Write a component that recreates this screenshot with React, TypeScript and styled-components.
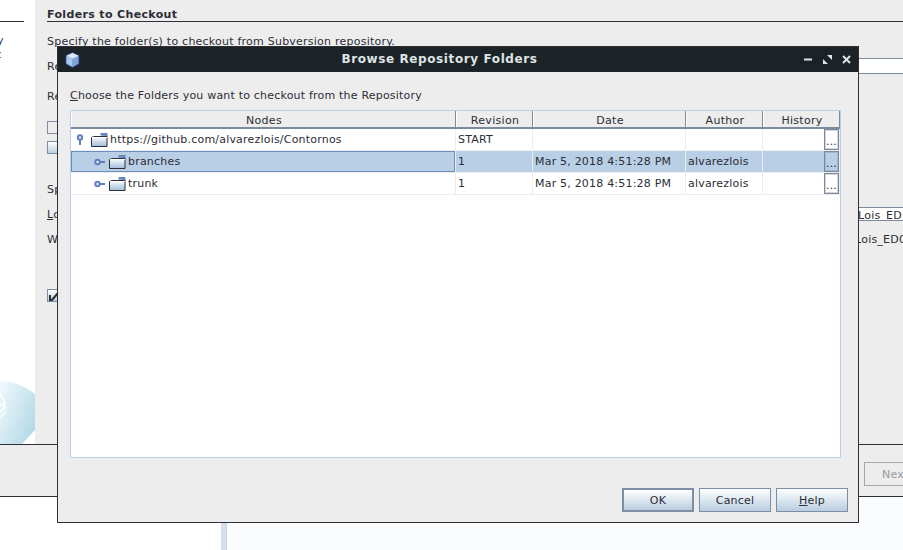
import * as React from 'react'
import styled, { createGlobalStyle } from 'styled-components'

const COLUMNS = [
  { name: 'Nodes', width: 385 },
  { name: 'Revision', width: 77 },
  { name: 'Date', width: 153 },
  { name: 'Author', width: 77 },
  { name: 'History', width: 77 }
]

const ROWS = [
  { label: 'https://github.com/alvarezlois/Contornos', depth: 0, open: true, revision: 'START', date: '', author: '' },
  { label: 'branches', depth: 1, open: false, revision: '1', date: 'Mar 5, 2018 4:51:28 PM', author: 'alvarezlois', selected: true },
  { label: 'trunk', depth: 1, open: false, revision: '1', date: 'Mar 5, 2018 4:51:28 PM', author: 'alvarezlois' }
]

const Handle = ({ open }: { open: boolean }) =>
  open ? (
    <HandleIcon width='8' height='12' viewBox='0 0 8 12'>
      <circle cx='4' cy='3.500' r='2.200' fill='#e8f0fa' stroke='#5f80bd' strokeWidth='2' />
      <path d='M4 6v5' stroke='#5f80bd' strokeWidth='2' />
    </HandleIcon>
  ) : (
    <HandleIcon width='12' height='8' viewBox='0 0 12 8'>
      <circle cx='3.500' cy='4' r='2.200' fill='#e8f0fa' stroke='#5f80bd' strokeWidth='2' />
      <path d='M6 4h5' stroke='#5f80bd' strokeWidth='2' />
    </HandleIcon>
  )

const Folder = ({ id }: { id: string }) => (
  <svg width='17' height='14' viewBox='0 0 17 14'>
    <defs>
      <linearGradient id={id} x1='0' y1='0' x2='0' y2='1'>
        <stop offset='0' stopColor='#ffffff' />
        <stop offset='1' stopColor='#9fbcd9' />
      </linearGradient>
    </defs>
    <path d='M10 2.500V.5h6v3' fill='#6f8fc4' stroke='#5f7fb5' />
    <path d='M.5 4.500l2-1h13.500v10h-15.500z' fill={`url(#${id})`} stroke='#2b2f36' />
    <path d='M1 4.500h15' stroke='#ffffff' />
  </svg>
)

const Cube = () => (
  <svg width='15' height='16' viewBox='0 0 15 16'>
    <path d='M7.500 .5l6.500 3v8.500l-6.500 3.500-6.500-3.500v-8.500z' fill='#7fa6dc' stroke='#27407a' />
    <path d='M1.500 3.800l6 3 6-3-6-2.800z' fill='#dbe9f7' />
    <path d='M1.500 4.200l5.500 2.800v7.500l-5.500-3z' fill='#a9c8ec' />
  </svg>
)

const App: React.FunctionComponent = () => (
  <Screen>
    <GlobalStyle />
    <Wizard>
      <WizardBody>
        <Sidebar>
          <SidebarRule />
          <StepText>y</StepText>
          <StepText>t</StepText>
          <Logo width='35' height='63' viewBox='0 0 35 63'>
            <defs>
              <linearGradient id='logo' x1='0' y1='0' x2='1' y2='0.7'>
                <stop offset='0' stopColor='#f3f9fc' />
                <stop offset='1' stopColor='#b4dae8' />
              </linearGradient>
            </defs>
            <path d='M0 0C14 0 26 6 35 13V49L22 63H0Z' fill='url(#logo)' />
            <path d='M0 14C5 18 6 24 2 30M0 25L5 22M0 31L6 26M0 36L6 31' fill='none' stroke='#fff' strokeWidth='1.600' />
          </Logo>
        </Sidebar>
        <Main>
          <Heading>Folders to Checkout</Heading>
          <FormRow $top={12} $height={14}>
            Specify the folder(s) to checkout from Subversion repository.
          </FormRow>
          <FormRow $top={10} $height={16}>
            Re
            <Field $framed $width={45} />
          </FormRow>
          <FormRow $top={14} $height={16}>
            Re
          </FormRow>
          <CheckBox $top={17} />
          <CheckBox $top={7} $filled />
          <FormRow $top={28} $height={14}>
            Sp
          </FormRow>
          <FormRow $top={11} $height={14}>
            <span>
              <u>L</u>o
            </span>
            <Field $framed $width={45}>
              Lois_ED
            </Field>
          </FormRow>
          <FormRow $top={11} $height={14}>
            W<Field $width={48}>Lois_ED0</Field>
          </FormRow>
          <CheckBox $top={43} $filled>
            <svg width='10' height='10' viewBox='0 0 10 10'>
              <path d='M1 4v5h2l6-7' fill='none' stroke='#2b2f36' strokeWidth='2' />
            </svg>
          </CheckBox>
        </Main>
      </WizardBody>
      <WizardFooter>
        <NextButton>Next</NextButton>
      </WizardFooter>
      <Desktop>
        <DesktopStrip />
      </Desktop>
    </Wizard>

    <Dialog>
      <TitleBar>
        <Cube />
        <TitleText>Browse Repository Folders</TitleText>
        <WindowControls>
          <svg width='9' height='9' viewBox='0 0 9 9'>
            <path d='M0 4.500h8' stroke='#dfe5ea' strokeWidth='2' />
          </svg>
          <svg width='9' height='9' viewBox='0 0 9 9'>
            <path d='M4 0h5v5zM0 4l5 5H0z' fill='#dfe5ea' />
          </svg>
          <svg width='9' height='9' viewBox='0 0 9 9'>
            <path d='M1 1l7 7M8 1l-7 7' stroke='#dfe5ea' strokeWidth='2' />
          </svg>
        </WindowControls>
      </TitleBar>
      <DialogBody>
        <Prompt>
          <u>C</u>hoose the Folders you want to checkout from the Repository
        </Prompt>
        <Table>
          <HeaderRow>
            {COLUMNS.map(column => (
              <HeaderCell key={column.name} $width={column.width}>
                {column.name}
              </HeaderCell>
            ))}
          </HeaderRow>
          {ROWS.map(row => (
            <Row key={row.label} $selected={row.selected}>
              <TreeCell $width={COLUMNS[0].width} $selected={row.selected}>
                <HandleSlot $depth={row.depth}>
                  <Handle open={row.open} />
                </HandleSlot>
                <Folder id={`folder-${row.label.length}`} />
                <NodeLabel>{row.label}</NodeLabel>
              </TreeCell>
              <Cell $width={COLUMNS[1].width}>{row.revision}</Cell>
              <Cell $width={COLUMNS[2].width}>{row.date}</Cell>
              <Cell $width={COLUMNS[3].width}>{row.author}</Cell>
              <HistoryCell $width={COLUMNS[4].width}>
                <EllipsisButton>...</EllipsisButton>
              </HistoryCell>
            </Row>
          ))}
        </Table>
        <Buttons>
          <Button $primary>OK</Button>
          <Button>Cancel</Button>
          <Button>
            <u>H</u>elp
          </Button>
        </Buttons>
      </DialogBody>
    </Dialog>
  </Screen>
)

export default App

const GlobalStyle = createGlobalStyle`
  html, body {
    margin: 0;
    padding: 0;
    background: #fff;
  }

  * {
    box-sizing: border-box;
  }
`

const Screen = styled.div`
  position: relative;
  width: 903px;
  height: 550px;
  overflow: hidden;
  font-family: 'DejaVu Sans', sans-serif;
  font-size: 11px;
  letter-spacing: 0.2px;
  color: #2c2d36;
  white-space: nowrap;
`

const Wizard = styled.div`
  display: flex;
  flex-direction: column;
  height: 100%;
`

const WizardBody = styled.div`
  display: flex;
  height: 444px;
`

const Sidebar = styled.div`
  display: flex;
  flex-direction: column;
  width: 35px;
  background: #fff;
  overflow: hidden;
`

const SidebarRule = styled.div`
  width: 24px;
  height: 1px;
  margin-top: 21px;
  margin-bottom: 12px;
  background: #2f3034;
`

const StepText = styled.div`
  height: 14px;
  color: #1d3a72;
  margin-left: -3px;
`

const Logo = styled.svg`
  margin-top: auto;
  display: block;
`

const Main = styled.div`
  flex: 1;
  display: flex;
  flex-direction: column;
  padding-left: 12px;
  background: #ededed;
`

const Heading = styled.div`
  height: 22px;
  padding-top: 8px;
  line-height: 13px;
  font-weight: bold;
  letter-spacing: 0.35px;
  border-bottom: 1px solid #2f3034;
`

const FormRow = styled.div<{ $top: number; $height: number }>`
  display: flex;
  justify-content: space-between;
  align-items: center;
  margin-top: ${p => p.$top}px;
  height: ${p => p.$height}px;
  letter-spacing: 0.23px;
`

const Field = styled.div<{ $framed?: boolean; $width: number }>`
  width: ${p => p.$width}px;
  height: 100%;
  line-height: 15px;
  overflow: hidden;
  background: ${p => (p.$framed ? '#fff' : 'transparent')};
  border-top: ${p => (p.$framed ? '1px solid #7c8a99' : 'none')};
  border-bottom: ${p => (p.$framed ? '1px solid #7c8a99' : 'none')};
`

const CheckBox = styled.div<{ $top: number; $filled?: boolean }>`
  display: flex;
  align-items: center;
  justify-content: center;
  width: 13px;
  height: 13px;
  margin-top: ${p => p.$top}px;
  border: 1px solid #7c8ea4;
  background: ${p => (p.$filled ? 'linear-gradient(#ffffff, #b9cee0)' : '#ededed')};
`

const WizardFooter = styled.div`
  display: flex;
  align-items: center;
  justify-content: flex-end;
  height: 53px;
  padding-top: 7px;
  background: #ededed;
  border-top: 1px solid #2f3034;
  border-bottom: 1px solid #2f3034;
`

const NextButton = styled.div`
  width: 39px;
  height: 24px;
  padding-left: 17px;
  line-height: 23px;
  color: #9a9a9a;
  overflow: hidden;
  border: 1px solid #a8a8a8;
  border-right: none;
`

const Desktop = styled.div`
  flex: 1;
  display: flex;
  padding-left: 221px;
  background: #fff;
`

const DesktopStrip = styled.div`
  flex: 1;
  border-left: 5px solid #d5dfec;
  background: #fbfcfe;
  box-shadow: inset 1px 0 0 #c5d8ee;
`

const Dialog = styled.div`
  position: absolute;
  left: 57px;
  top: 46px;
  display: flex;
  flex-direction: column;
  width: 802px;
  height: 477px;
  background: #ededed;
  border: 1px solid #2f3034;
`

const TitleBar = styled.div`
  display: flex;
  align-items: center;
  height: 25px;
  padding: 0 7px;
  background: #1b2326;
`

const TitleText = styled.div`
  flex: 1;
  padding: 0 5px 2px 0;
  text-align: center;
  font-size: 12px;
  font-weight: bold;
  letter-spacing: 0.6px;
  color: #dfe3e6;
`

const WindowControls = styled.div`
  display: flex;
  gap: 10px;
`

const DialogBody = styled.div`
  flex: 1;
  display: flex;
  flex-direction: column;
  padding: 0 17px 10px 12px;
`

const Prompt = styled.div`
  height: 38px;
  padding-top: 17px;
  line-height: 14px;
`

const Table = styled.div`
  height: 348px;
  background: #fff;
  border: 1px solid #b7d0e7;
`

const HeaderRow = styled.div`
  display: flex;
  height: 18px;
  background: #ededed;
  border-bottom: 2px solid #7b8a9c;
`

const HeaderCell = styled.div<{ $width: number }>`
  width: ${p => p.$width}px;
  padding-left: 2px;
  text-align: center;
  line-height: 19px;
  letter-spacing: 0.3px;
  border-right: 1px solid #7b8a9c;
  box-shadow: inset 1px 0 0 #fff;
`

const Row = styled.div<{ $selected?: boolean }>`
  display: flex;
  height: 22px;
  background: ${p => (p.$selected ? '#b8cfe5' : '#fff')};
`

const Cell = styled.div<{ $width: number }>`
  width: ${p => p.$width}px;
  padding-left: 2px;
  line-height: 21px;
  border-right: 1px solid #ededed;
  border-bottom: 1px solid #ededed;
`

const TreeCell = styled(Cell)<{ $selected?: boolean }>`
  display: flex;
  align-items: center;
  padding-left: 0;
  box-shadow: ${p => (p.$selected ? 'inset 0 0 0 1px #6c8ebf' : 'none')};
`

const HandleSlot = styled.div<{ $depth: number }>`
  display: flex;
  justify-content: center;
  width: 20px;
  margin-left: ${p => p.$depth * 18}px;
  padding: ${p => (p.$depth ? '0 0 0 2px' : '0 2px 0 0')};
`

const HandleIcon = styled.svg`
  display: block;
`

const NodeLabel = styled.span`
  margin-left: 2px;
`

const HistoryCell = styled(Cell)`
  display: flex;
  justify-content: flex-end;
  padding: 0;
`

const EllipsisButton = styled.div`
  width: 15px;
  height: 21px;
  line-height: 24px;
  text-align: center;
  background: transparent;
  border: 1px solid #7b8a9c;
  box-shadow: inset 0 0 0 1px rgba(123, 138, 156, 0.35);
`

const Buttons = styled.div`
  display: flex;
  justify-content: flex-end;
  gap: 5px;
  margin-top: auto;
  margin-right: -7px;
`

const Button = styled.div<{ $primary?: boolean }>`
  width: 72px;
  height: 24px;
  text-align: center;
  line-height: ${p => (p.$primary ? 21 : 23)}px;
  background: linear-gradient(#ffffff, #b9cee0);
  border: ${p => (p.$primary ? '2px solid #7c8ea4' : '1px solid #7c8ea4')};
`
